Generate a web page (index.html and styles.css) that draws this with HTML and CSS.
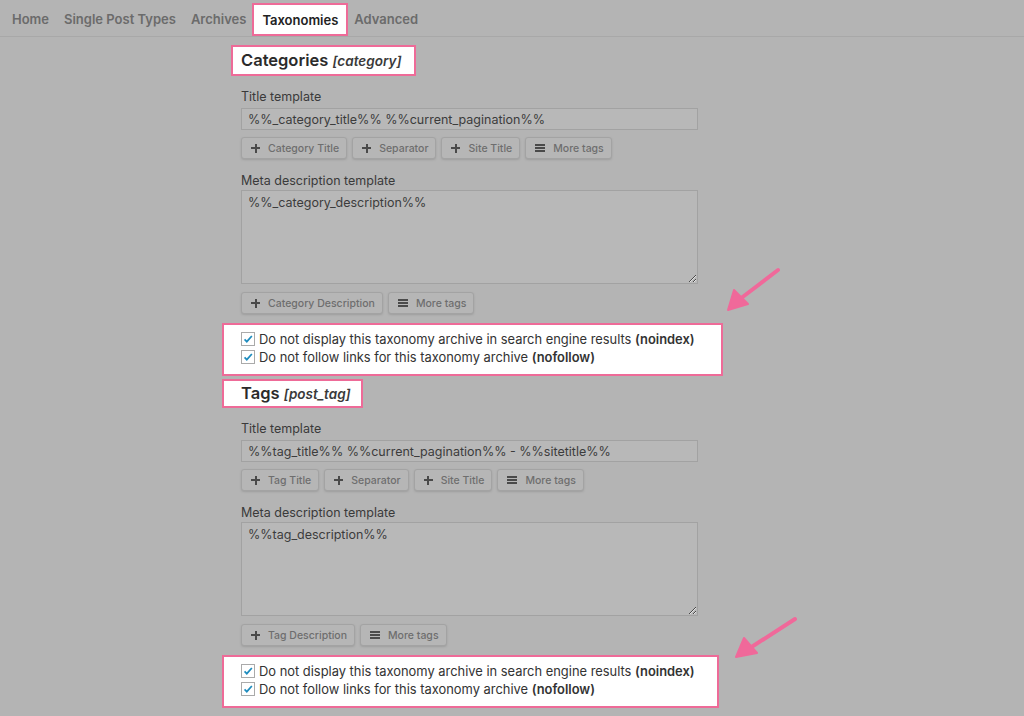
FILE: index.html
```html
<!DOCTYPE html>
<html lang="en">
<head>
  <meta charset="UTF-8" />
  <title>Search Appearance - Taxonomies</title>
  <link rel="stylesheet" href="styles.css">
</head>
<body>

<div class="tabs">
  <a class="tab">Home</a>
  <a class="tab">Single Post Types</a>
  <a class="tab">Archives</a>
  <a class="tab active">Taxonomies</a>
  <a class="tab">Advanced</a>
</div>

<div class="main">

  <h2 class="heading cat">Categories <em>[category]</em></h2>

  <div class="field">
    <label>Title template</label>
    <input type="text" class="input" value="%%_category_title%% %%current_pagination%%">
    <div class="buttons">
      <button class="btn"><span class="plus"></span>Category Title</button>
      <button class="btn"><span class="plus"></span>Separator</button>
      <button class="btn"><span class="plus"></span>Site Title</button>
      <button class="btn"><span class="menu"></span>More tags</button>
    </div>
  </div>

  <div class="field">
    <label>Meta description template</label>
    <textarea class="textarea">%%_category_description%%</textarea>
    <div class="buttons">
      <button class="btn"><span class="plus"></span>Category Description</button>
      <button class="btn"><span class="menu"></span>More tags</button>
    </div>
  </div>

  <div class="checks wide">
    <div class="check"><span class="box"><svg viewBox="0 0 14 14"><path d="M3 7.5l2.6 2.6L11.5 3.5" fill="none" stroke="#1e8cbe" stroke-width="2"/></svg></span><span>Do not display this taxonomy archive in search engine results <b>(noindex)</b></span></div>
    <div class="check"><span class="box"><svg viewBox="0 0 14 14"><path d="M3 7.5l2.6 2.6L11.5 3.5" fill="none" stroke="#1e8cbe" stroke-width="2"/></svg></span><span>Do not follow links for this taxonomy archive <b>(nofollow)</b></span></div>
  </div>

  <h2 class="heading tag">Tags <em>[post_tag]</em></h2>

  <div class="field">
    <label>Title template</label>
    <input type="text" class="input" value="%%tag_title%% %%current_pagination%% - %%sitetitle%%">
    <div class="buttons">
      <button class="btn"><span class="plus"></span>Tag Title</button>
      <button class="btn"><span class="plus"></span>Separator</button>
      <button class="btn"><span class="plus"></span>Site Title</button>
      <button class="btn"><span class="menu"></span>More tags</button>
    </div>
  </div>

  <div class="field">
    <label>Meta description template</label>
    <textarea class="textarea">%%tag_description%%</textarea>
    <div class="buttons">
      <button class="btn"><span class="plus"></span>Tag Description</button>
      <button class="btn"><span class="menu"></span>More tags</button>
    </div>
  </div>

  <div class="checks">
    <div class="check"><span class="box"><svg viewBox="0 0 14 14"><path d="M3 7.5l2.6 2.6L11.5 3.5" fill="none" stroke="#1e8cbe" stroke-width="2"/></svg></span><span>Do not display this taxonomy archive in search engine results <b>(noindex)</b></span></div>
    <div class="check"><span class="box"><svg viewBox="0 0 14 14"><path d="M3 7.5l2.6 2.6L11.5 3.5" fill="none" stroke="#1e8cbe" stroke-width="2"/></svg></span><span>Do not follow links for this taxonomy archive <b>(nofollow)</b></span></div>
  </div>

</div>

<!-- annotation arrows -->
<svg class="arrow arrow-1" width="60" height="50" viewBox="0 0 60 50">
  <path d="M54 4L16 33" stroke="#f0699a" stroke-width="4" stroke-linecap="round"/>
  <path d="M4 44L10 24L24 38Z" fill="#f0699a" stroke="#f0699a" stroke-width="2" stroke-linejoin="round"/>
</svg>
<svg class="arrow arrow-2" width="70" height="50" viewBox="0 0 70 50">
  <path d="M63 4L18 33" stroke="#f0699a" stroke-width="4" stroke-linecap="round"/>
  <path d="M4 42L12 23L25 38Z" fill="#f0699a" stroke="#f0699a" stroke-width="2" stroke-linejoin="round"/>
</svg>

</body>
</html>
```

FILE: styles.css
```css
body {
  margin: 0;
  background: #b4b4b4;
  font-family: Inter, "Liberation Sans", sans-serif;
  color: #333;
  position: relative;
  min-height: 716px;
  overflow: hidden;
}

/* tabs */
.tabs {
  display: flex;
  align-items: stretch;
  height: 37px;
  padding-left: 12px;
  border-bottom: 1px solid #a8a8a8;
  box-sizing: border-box;
}

.tab {
  display: flex;
  align-items: center;
  padding: 2px 0 0;
  margin-right: 15px;
  font-size: 13px;
  font-weight: 600;
  color: #6b6b6b;
}

.tab.active {
  margin: 3px 6px 0 -9px;
  padding: 0 8px;
  background: #fff;
  color: #222;
  border: 2px solid #ee6b98;
}

/* content */
.main {
  padding-left: 222px;
  width: 502px;
}

.heading {
  display: inline-block;
  margin: 0;
  background: #fff;
  border: 2px solid #ee6b98;
  font-size: 16.5px;
  font-weight: 600;
  color: #2b2b2b;
  box-sizing: border-box;
}

.heading em {
  font-size: 13.5px;
  color: #3a3a3a;
}

.heading.cat {
  margin: 8px 0 0 9px;
  height: 31px;
  line-height: 27px;
  padding: 0 13px 0 8px;
}

.heading.tag {
  margin-top: 3px;
  height: 29px;
  line-height: 25px;
  padding: 0 10px 0 17px;
}

.field {
  margin-left: 19px;
  width: 457px;
  padding-top: 13px;
}

.field + .field {
  padding-top: 14px;
}

label {
  display: block;
  font-size: 12.5px;
  line-height: 16px;
  color: #3a3a3a;
}

.input {
  display: block;
  box-sizing: border-box;
  width: 100%;
  height: 22px;
  margin-top: 3px;
  padding: 0 6px;
  background: #b8b8b8;
  border: 1px solid #a2a2a2;
  font-family: inherit;
  font-size: 12.5px;
  color: #3c3c3c;
}

.textarea {
  display: block;
  box-sizing: border-box;
  width: 100%;
  height: 94px;
  margin-top: 1px;
  padding: 4px 6px;
  background: #b8b8b8;
  border: 1px solid #a2a2a2;
  font-family: inherit;
  font-size: 12.5px;
  color: #3c3c3c;
}

.buttons {
  display: flex;
  gap: 5px;
  margin-top: 7px;
}

.field + .field .buttons {
  margin-top: 8px;
}

.btn {
  display: flex;
  align-items: center;
  height: 22px;
  padding: 0 7px 0 9px;
  background: #b6b6b6;
  border: 1px solid #a3a3a3;
  border-radius: 3px;
  box-shadow: 0 1px 2px #9e9e9e;
  font-family: inherit;
  font-size: 10.5px;
  font-weight: 500;
  color: #6e6e6e;
}

.plus,
.menu {
  position: relative;
  width: 9px;
  height: 9px;
  margin-right: 8px;
}

.plus::before,
.plus::after {
  content: "";
  position: absolute;
  background: #4a4a4a;
}
.plus::before { left: 0; top: 3.5px; width: 9px; height: 2px; }
.plus::after { left: 3.5px; top: 0; width: 2px; height: 9px; }

.menu {
  width: 10px;
  height: 8px;
  border-top: 2px solid #4a4a4a;
  border-bottom: 2px solid #4a4a4a;
  box-sizing: border-box;
}
.menu::before {
  content: "";
  position: absolute;
  left: 0;
  top: 1px;
  width: 10px;
  height: 2px;
  background: #4a4a4a;
}

.checks {
  margin-top: 9px;
  width: 497px;
  height: 53px;
  box-sizing: border-box;
  padding: 5px 0 0 17px;
  background: #fff;
  border: 2px solid #ee6b98;
}

.checks.wide {
  width: 501px;
}

.check {
  display: flex;
  align-items: center;
  height: 18px;
  font-size: 12.9px;
  color: #333;
}

.check b {
  font-weight: 600;
}

.box {
  width: 14px;
  height: 14px;
  box-sizing: border-box;
  margin-right: 4px;
  border: 1px solid #aaa;
  background: #fff;
}

.box svg {
  display: block;
  width: 12px;
  height: 12px;
}

/* annotation arrows */
.arrow {
  position: absolute;
}
.arrow-1 { left: 724px; top: 266px; }
.arrow-2 { left: 732px; top: 615px; }
```
